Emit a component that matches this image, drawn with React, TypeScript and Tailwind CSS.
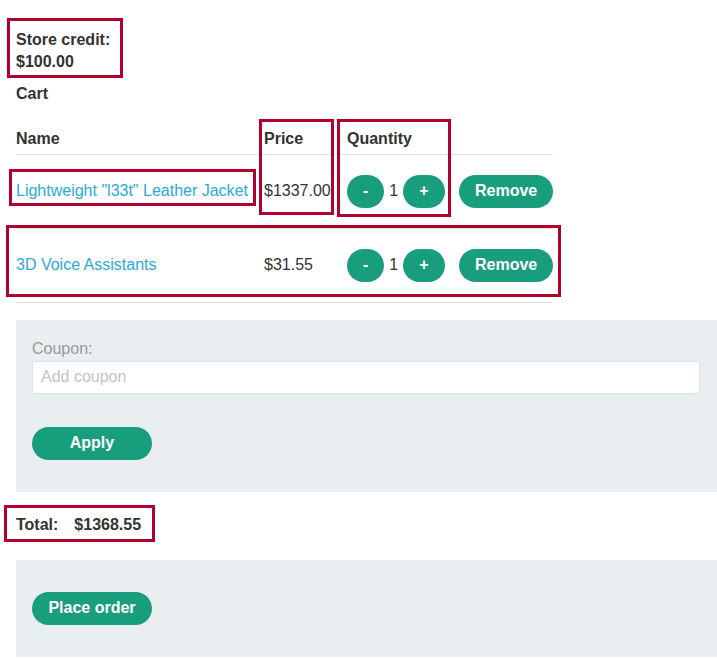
import React from "react";

const green = "bg-[#189d7d]";

function Btn({ children, className = "" }: { children: React.ReactNode; className?: string }) {
  return (
    <button
      className={`${green} h-[33px] rounded-full px-4 text-[16px] font-bold leading-none text-white ${className}`}
    >
      {children}
    </button>
  );
}

function Row({ name, price }: { name: string; price: string }) {
  return (
    <tr className="border-b border-[#e2e2e2]">
      <td className="h-[74px] p-0 align-middle">
        <a className="text-[#2aa9e0]" href="#">
          {name}
        </a>
      </td>
      <td className="p-0 align-middle">{price}</td>
      <td className="p-0 align-middle">
        <div className="flex items-center gap-[5px]">
          <Btn>-</Btn>
          <span>1</span>
          <Btn>+</Btn>
        </div>
      </td>
      <td className="p-0 align-middle">
        <Btn>Remove</Btn>
      </td>
    </tr>
  );
}

function Mark({ c }: { c: string }) {
  return <div className={`pointer-events-none absolute border-[3px] border-[#b1002e] ${c}`} />;
}

export default function App() {
  return (
    <div
      className="relative min-h-[659px] bg-white pb-[2px] text-[16px] text-[#333332]"
      style={{ fontFamily: '"Liberation Sans", Arial, sans-serif' }}
    >
      <div className="pl-4">
        <div className="pt-[29px] font-bold leading-[22px]">
          <div>Store credit:</div>
          <div>$100.00</div>
        </div>
        <div className="mt-[10px] font-bold leading-[22px]">Cart</div>

        <table className="mt-[19px] w-[537px] table-fixed border-collapse">
          <colgroup>
            <col className="w-[248px]" />
            <col className="w-[83px]" />
            <col className="w-[112px]" />
            <col className="w-[94px]" />
          </colgroup>
          <thead>
            <tr className="border-b border-[#e2e2e2]">
              <th className="h-[30px] p-0 text-left align-middle font-bold">Name</th>
              <th className="p-0 text-left align-middle font-bold">Price</th>
              <th className="p-0 text-left align-middle font-bold">Quantity</th>
              <th className="p-0" />
            </tr>
          </thead>
          <tbody>
            <Row name={'Lightweight "l33t" Leather Jacket'} price="$1337.00" />
            <Row name="3D Voice Assistants" price="$31.55" />
          </tbody>
        </table>

        <div className="mt-[17px] bg-[#e9eef0] pb-8 pl-4 pr-[17px] pt-[18px]">
          <div className="leading-[22px] text-[#999]">Coupon:</div>
          <input
            className="mt-[1px] block h-[33px] w-full border border-[#dfe3e5] bg-white px-2 text-[16px] outline-none placeholder:text-[#c4c4c4]"
            placeholder="Add coupon"
          />
          <Btn className="mt-[33px] min-w-[120px]">Apply</Btn>
        </div>

        <div className="mt-[22px] flex gap-4 font-bold leading-[22px]">
          <span>Total:</span>
          <span>$1368.55</span>
        </div>

        <div className="mt-[24px] bg-[#e9eef0] py-8 pl-4">
          <Btn className="min-w-[120px]">Place order</Btn>
        </div>
      </div>

      <Mark c="left-[7px] top-[18px] h-[60px] w-[116px]" />
      <Mark c="left-[9px] top-[169px] h-[37px] w-[247px]" />
      <Mark c="left-[259px] top-[119px] h-[96px] w-[75px]" />
      <Mark c="left-[337px] top-[119px] h-[98px] w-[114px]" />
      <Mark c="left-[6px] top-[225px] h-[72px] w-[555px]" />
      <Mark c="left-[4px] top-[505px] h-[37px] w-[151px]" />
    </div>
  );
}
